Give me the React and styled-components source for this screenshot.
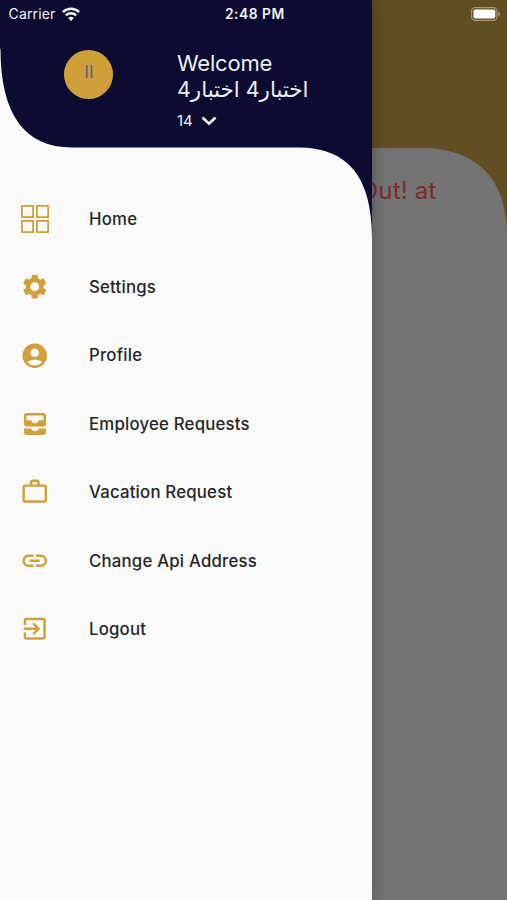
import React from 'react';
import styled, { createGlobalStyle } from 'styled-components';
import {
  MdSettings,
  MdAccountCircle,
  MdWorkOutline,
  MdLink,
  MdExitToApp,
} from 'react-icons/md';

const GlobalStyle = createGlobalStyle`
  body {
    margin: 0;
    font-family: Inter, "DejaVu Sans", sans-serif;
  }
`;

const GridIcon = () => (
  <svg width="28" height="28" viewBox="0 0 28 28" fill="none" stroke="currentColor" strokeWidth="1.8">
    <rect x="0.9" y="0.9" width="11.2" height="11.2" />
    <rect x="15.9" y="0.9" width="11.2" height="11.2" />
    <rect x="0.9" y="15.9" width="11.2" height="11.2" />
    <rect x="15.9" y="15.9" width="11.2" height="11.2" />
  </svg>
);

const InboxIcon = () => (
  <svg width="22" height="22" viewBox="0 0 22 22" fill="currentColor">
    <path
      fillRule="evenodd"
      d="M2.400 0h17.200A2.400 2.400 0 0 1 22 2.400v8.800a2.400 2.400 0 0 1-2.400 2.400H2.400A2.400 2.400 0 0 1 0 11.200V2.400A2.400 2.400 0 0 1 2.400 0zM2.500 2.500v4.700h4.800a3.750 3.600 0 0 0 7.400 0h4.800V2.500z"
    />
    <path d="M0 15.600h7.300a3.750 3.200 0 0 0 7.400 0H22v4a2.400 2.400 0 0 1-2.400 2.400H2.400A2.400 2.400 0 0 1 0 19.600z" />
  </svg>
);

const menuItems = [
  { label: 'Home', icon: <GridIcon /> },
  { label: 'Settings', icon: <MdSettings /> },
  { label: 'Profile', icon: <MdAccountCircle /> },
  { label: 'Employee Requests', icon: <InboxIcon /> },
  { label: 'Vacation Request', icon: <MdWorkOutline /> },
  { label: 'Change Api Address', icon: <MdLink /> },
  { label: 'Logout', icon: <MdExitToApp /> },
];

const App = () => (
  <Screen>
    <GlobalStyle />

    <HomePage>
      <HomeSheet>
        <Notice>Out! at</Notice>
      </HomeSheet>
    </HomePage>

    <Drawer>
      <DrawerHeader>
        <Avatar>اا</Avatar>
        <UserInfo>
          <Welcome>Welcome</Welcome>
          <UserName>
            <span>4</span><bdi>اختبار</bdi> <span>4</span><bdi>اختبار</bdi>
          </UserName>
          <UserCode>
            14
            <svg width="16" height="10" viewBox="0 0 16 10" fill="none" stroke="currentColor" strokeWidth="2.6">
              <path d="M1.5 1.5 8 7.8l6.5-6.3" />
            </svg>
          </UserCode>
        </UserInfo>
      </DrawerHeader>

      <Menu>
        {menuItems.map((item) => (
          <MenuItem key={item.label}>
            <IconBox>{item.icon}</IconBox>
            {item.label}
          </MenuItem>
        ))}
      </Menu>
    </Drawer>

    <StatusBar>
      <Carrier>
        Carrier
        <svg width="18" height="14" viewBox="0 0 18 14" fill="none" stroke="currentColor" strokeWidth="2.4">
          <path d="M.9 5.1a11.6 11.6 0 0 1 16.2 0" />
          <path d="M3.9 8.3a7.3 7.3 0 0 1 10.2 0" />
          <path d="M9 14 6.2 11.1a4 4 0 0 1 5.6 0z" fill="currentColor" stroke="none" />
        </svg>
      </Carrier>
      <Clock>2:48 PM</Clock>
      <Battery>
        <svg width="30" height="14" viewBox="0 0 30 14">
          <rect x="0.6" y="0.6" width="25.4" height="12.8" rx="3.6" fill="none" stroke="#a89c80" strokeWidth="1.1" />
          <rect x="2.5" y="2.5" width="21.8" height="9" rx="1.8" fill="#fff" />
          <path d="M27.4 4.7v4.6c1-.4 1.7-1.3 1.7-2.3s-.7-1.9-1.7-2.3z" fill="#a89c80" />
        </svg>
      </Battery>
    </StatusBar>
  </Screen>
);

export default App;


const Screen = styled.div`
  position: relative;
  width: 507px;
  height: 900px;
  overflow: hidden;
`;

/* Page under the drawer, already dimmed by the scrim */
const HomePage = styled.div`
  height: 100%;
  box-sizing: border-box;
  padding-top: 147.5px;
  background: #624e23;
`;

const HomeSheet = styled.div`
  height: 753px;
  box-sizing: border-box;
  padding: 28px 70.5px 0 0;
  background: #747474;
  clip-path: path('M0 0H417C477 0 507 30 507 90V753H0Z');
`;

const Notice = styled.div`
  font-size: 24px;
  line-height: 30px;
  letter-spacing: 0.2px;
  text-align: right;
  color: #7e2a2b;
`;

const Drawer = styled.aside`
  position: absolute;
  top: 0;
  left: 0;
  width: 372px;
  height: 100%;
  background: #fafafa;
  box-shadow: 0 0 14px rgba(0, 0, 0, 0.32);
`;

const DrawerHeader = styled.header`
  display: flex;
  align-items: flex-start;
  height: 240px;
  box-sizing: border-box;
  padding: 50px 0 0 64.4px;
  gap: 63.6px;
  color: #eeeef4;
  background: #0c0b31;
  clip-path: path('M0 0H372V238C372 177.5 348 147.5 299 147.5H72C24.5 147.5 .5 114 .5 49L0 49Z');
`;

const Avatar = styled.div`
  width: 49px;
  height: 49px;
  border-radius: 50%;
  background: #cfa03a;
  color: #466a78;
  font-size: 17px;
  line-height: 44px;
  text-align: center;
`;

const UserInfo = styled.div`
  display: flex;
  flex-direction: column;
`;

const Welcome = styled.div`
  font-size: 22px;
  line-height: 26px;
  letter-spacing: -0.2px;
`;

const UserName = styled.div`
  font-size: 21.4px;
  line-height: 27px;
  white-space: nowrap;
`;

const UserCode = styled.div`
  display: flex;
  align-items: center;
  gap: 8px;
  margin-top: 8px;
  font-size: 15px;
  line-height: 20px;
`;

const Menu = styled.nav`
  display: flex;
  flex-direction: column;
  margin-top: -55.6px;
`;

const MenuItem = styled.a`
  display: flex;
  align-items: center;
  height: 68.4px;
  padding-left: 21px;
  gap: 40px;
  font-size: 16.8px;
  font-weight: 500;
  letter-spacing: 0.2px;
  color: #262626;
`;

const IconBox = styled.span`
  display: flex;
  align-items: center;
  justify-content: center;
  width: 28px;
  height: 30px;
  font-size: 29.5px;
  color: #d0a03a;

  svg {
    flex-shrink: 0;
  }
`;

const StatusBar = styled.div`
  position: absolute;
  top: 0;
  left: 0;
  display: grid;
  grid-template-columns: 1fr auto 1fr;
  align-items: center;
  width: 507px;
  height: 27px;
  box-sizing: border-box;
  padding: 0 6px 0 8.6px;
  color: #f3f3f7;
`;

const Carrier = styled.div`
  display: flex;
  align-items: center;
  gap: 6px;
  font-size: 14px;
  letter-spacing: 0.15px;
`;

const Clock = styled.div`
  font-size: 13.8px;
  font-weight: 600;
  letter-spacing: 0.5px;
`;

const Battery = styled.div`
  display: flex;
  justify-content: flex-end;
`;
